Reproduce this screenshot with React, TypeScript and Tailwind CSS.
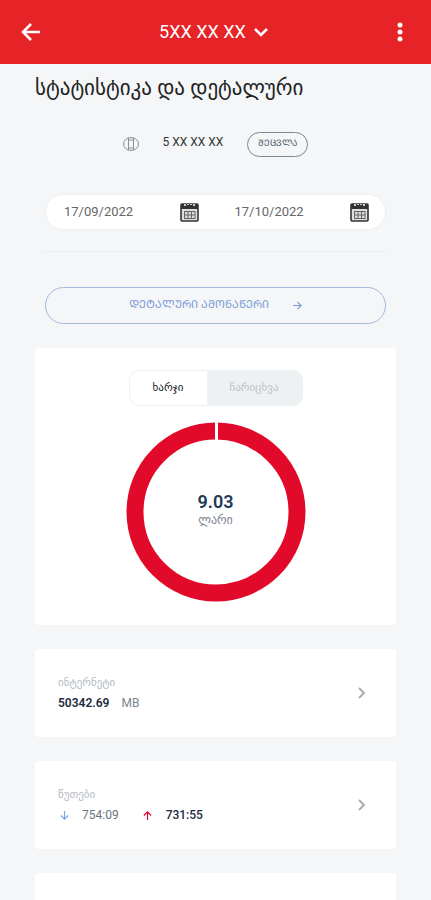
import type { ReactNode } from "react";

interface UsageCardProps {
	title: string;
	children: ReactNode;
}

interface DateFieldProps {
	id: string;
	label: string;
	value: string;
}

export default function App() {
	return (
		<div className="flex h-screen flex-col overflow-hidden bg-[#f4f6f8] font-[Roboto,'DejaVu_Sans',sans-serif] text-[#1c2b3f]">
			<Header />
			<main className="flex-1 overflow-y-auto px-[35px] pb-6 [scrollbar-width:none]">
				<h1 className="mt-2 text-[21px] leading-8 whitespace-nowrap text-[#222]">
					სტატისტიკა და დეტალური
				</h1>
				<section className="mt-6 flex h-8 items-center justify-center">
					<NumberIcon />
					<span className="ml-6 pb-1 text-xs text-[#333]">5 XX XX XX</span>
					<button
						type="button"
						className="ml-6 flex h-[25px] w-[61px] items-center justify-center rounded-full border border-[#7d8793] text-[9px] text-[#4d5a69]"
					>
						ᲨᲔᲪᲕᲚᲐ
					</button>
				</section>
				<section className="mx-[10px] mt-[34px] flex h-[36px] items-center rounded-full border border-[#eceef1] bg-white pr-4 pl-[18px]">
					<DateField id="from" label="დან" value="17/09/2022" />
					<span className="w-9 shrink-0" />
					<DateField id="to" label="მდე" value="17/10/2022" />
				</section>
				<hr className="mx-2 mt-[21px] border-[#eceef1]" />
				<button
					type="button"
					className="mx-[10px] mt-[35px] flex h-[37px] w-[calc(100%-20px)] items-center justify-center gap-6 rounded-full border border-[#a4b9de] text-[11px] text-[#7b9bd6]"
				>
					ᲓᲔᲢᲐᲚᲣᲠᲘ ᲐᲛᲝᲜᲐᲬᲔᲠᲘ
					<ArrowIcon className="size-[9px]" />
				</button>
				<ChartCard />
				<UsageCard title="ინტერნეტი">
					<strong className="font-semibold">50342.69</strong>
					<span className="ml-3 text-[#7b8591]">MB</span>
				</UsageCard>
				<UsageCard title="წუთები">
					<ArrowIcon className="ml-[2px] size-[9px] rotate-90 text-[#7ba3e6]" />
					<span className="ml-[13px] text-[#6b7580]">754:09</span>
					<ArrowIcon className="ml-6 size-[9px] -rotate-90 text-[#e4002b]" />
					<span className="ml-[14px] font-medium">731:55</span>
				</UsageCard>
				<section className="mt-6 h-[88px] rounded-[4px] bg-white" />
			</main>
		</div>
	);
}

const Header = () => {
	return (
		<header className="flex h-16 shrink-0 items-center justify-between bg-[#e62326] px-[21px] text-white">
			<button type="button" aria-label="Back" className="w-5">
				<svg viewBox="0 0 20 20" className="size-5" fill="none" stroke="currentColor" strokeWidth="2.6">
					<path d="M19 10H2M10 2L2 10l8 8" />
				</svg>
			</button>
			<button type="button" className="flex items-center gap-2 pr-1 text-lg">
				5XX XX XX
				<svg viewBox="0 0 14 10" className="h-[10px] w-[14px]" fill="none" stroke="currentColor" strokeWidth="2.6">
					<path d="M1 2l6 6 6-6" />
				</svg>
			</button>
			<button type="button" aria-label="Menu" className="flex w-5 justify-center">
				<svg viewBox="0 0 6 20" className="h-5 w-[6px]" fill="currentColor">
					<circle cx="3" cy="3" r="2.5" />
					<circle cx="3" cy="10" r="2.5" />
					<circle cx="3" cy="17" r="2.5" />
				</svg>
			</button>
		</header>
	);
};

const DateField = ({ id, label, value }: DateFieldProps) => {
	return (
		<div className="flex min-w-0 flex-1 items-center justify-between">
			<input
				id={id}
				aria-label={label}
				defaultValue={value}
				className="w-full min-w-0 text-[13px] text-[#666]"
			/>
			<CalendarIcon />
		</div>
	);
};

const ChartCard = () => {
	return (
		<section className="mt-6 flex h-[277px] flex-col items-center rounded-[4px] bg-white">
			<div className="mt-[22px] flex h-9 w-[174px] rounded-[10px] border border-[#eef0f2] bg-[#eef1f3] text-[11px]">
				<button type="button" className="w-[77px] rounded-l-[9px] bg-white font-medium text-[#222]">
					ხარჯი
				</button>
				<button type="button" className="flex-1 text-[#bcc3c9]">
					ჩარიცხვა
				</button>
			</div>
			<div className="mt-4 grid size-[180px] place-items-center">
				<svg viewBox="0 0 180 180" className="col-start-1 row-start-1 size-full">
					<circle cx="90" cy="90" r="81" fill="none" stroke="#e20a2a" strokeWidth="17" />
					<path d="M90.5 0v20" stroke="#fff" strokeWidth="3" />
				</svg>
				<div className="col-start-1 row-start-1 flex flex-col items-center pb-1">
					<span className="text-lg leading-5 font-semibold text-[#1d3a56]">9.03</span>
					<span className="text-xs leading-4 text-[#7b8591]">ლარი</span>
				</div>
			</div>
		</section>
	);
};

const UsageCard = ({ title, children }: UsageCardProps) => {
	return (
		<section className="mt-6 flex h-[88px] items-center justify-between rounded-[4px] bg-white pr-[30px] pl-[23px]">
			<div>
				<h2 className="text-[11px] leading-5 text-[#b4bac1]">{title}</h2>
				<div className="flex items-center text-xs leading-5">{children}</div>
			</div>
			<button type="button" aria-label={title}>
				<svg viewBox="0 0 8 12" className="h-3 w-2" fill="none" stroke="#a9adb1" strokeWidth="2">
					<path d="M1 1l5 5-5 5" />
				</svg>
			</button>
		</section>
	);
};

const ArrowIcon = ({ className }: { className: string }) => {
	return (
		<svg viewBox="0 0 10 10" className={className} fill="none" stroke="currentColor" strokeWidth="1.3">
			<path d="M0 5h9M5 1l4 4-4 4" />
		</svg>
	);
};

const NumberIcon = () => {
	return (
		<svg viewBox="0 0 16 16" className="size-4" fill="none" stroke="#88909a">
			<ellipse cx="8" cy="8" rx="7.5" ry="6.5" />
			<path d="M5.5 2v12M10.5 2v12M5.5 4h5M5.5 12h5" />
		</svg>
	);
};

const CalendarIcon = () => {
	return (
		<svg viewBox="0 0 19 19" className="size-[19px] shrink-0">
			<rect x="1" y="1" width="17" height="17" rx="1" fill="#ddd" stroke="#333" strokeWidth="1.6" />
			<path d="M1 1h17v5H1z" fill="#333" />
			<path d="M5 1v2M8 1v1M11 1v1M14 1v2" stroke="#fff" strokeWidth="1.5" />
			<path d="M4 8.5h11M4 12h11M4 15.5h11M4.5 8v8M8 8v8M11.5 8v8M15 8v8" stroke="#666" fill="none" />
		</svg>
	);
};
